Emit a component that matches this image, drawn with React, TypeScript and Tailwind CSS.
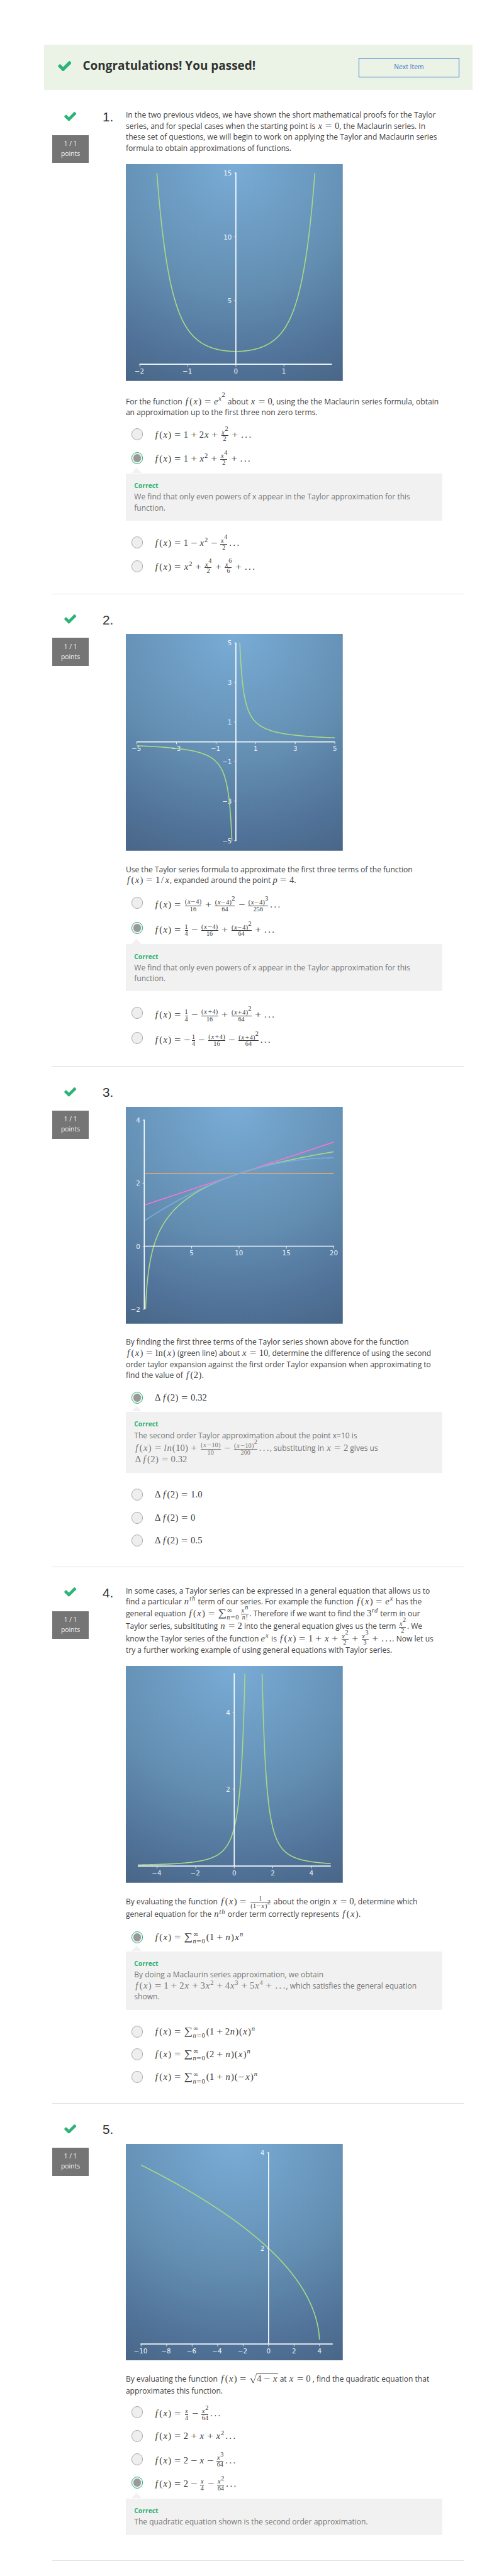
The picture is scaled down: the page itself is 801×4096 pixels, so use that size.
import React from "react";

/* ---------- math typesetting ---------- */

const GLYPHS: Record<string, string> = {
  f: "w-[0.56em] italic",
  x: "w-[0.572em] italic",
  n: "w-[0.6em] italic",
  e: "w-[0.466em] italic",
  p: "w-[0.503em] italic",
  t: "w-[0.361em] italic",
  h: "w-[0.576em] italic",
  r: "w-[0.451em] italic",
  d: "w-[0.52em] italic",
  l: "w-[0.298em] italic",
  L: "w-[0.278em]",
  N: "w-[0.556em]",
  "(": "w-[0.389em]",
  ")": "w-[0.389em]",
  "Δ": "w-[0.833em]",
  "∞": "w-[1em]",
  ".": "w-[0.278em]",
  "…": "w-[0.42em]",
  "!": "w-[0.278em]",
  "/": "w-[0.5em]",
};

const UPRIGHT: Record<string, string> = { L: "l", N: "n", "…": "." };

function group(s: string, at: number): [string, number] {
  let depth = 0;
  for (let i = at; i < s.length; i++) {
    if (s[i] === "{") depth++;
    if (s[i] === "}") depth--;
    if (depth === 0) return [s.slice(at + 1, i), i + 1];
  }
  return [s.slice(at + 1), s.length];
}

function typeset(s: string, level: number): React.ReactNode[] {
  const out: React.ReactNode[] = [];
  let i = 0;
  while (i < s.length) {
    const c = s[i];
    const key = i;
    if (c === "^") {
      const [body, next] = group(s, i + 1);
      out.push(
        <span
          key={key}
          className={
            level === 0
              ? "mr-[0.07em] text-[0.72em] leading-[0] align-[0.56em]"
              : "leading-[0] align-[0.54em]"
          }
        >
          {typeset(body, level + 1)}
        </span>,
      );
      i = next;
    } else if (s.startsWith("\\frac", i)) {
      const [num, a] = group(s, i + 5);
      const [den, b] = group(s, a);
      out.push(
        <span
          key={key}
          className="mx-[0.17em] -my-4 inline-flex flex-col items-center align-middle text-[0.7em]"
        >
          <span className="box-content h-[1em] self-stretch border-b border-current text-center leading-[1em]">
            {typeset(num, 1)}
          </span>
          <span className="h-[0.95em] leading-[0.95em]">{typeset(den, 1)}</span>
        </span>,
      );
      i = b;
    } else if (s.startsWith("\\sum", i)) {
      out.push(
        <React.Fragment key={key}>
          <span className="inline-block w-[0.86em] origin-center scale-x-[1.16] text-center text-[1.13em] leading-[0]">
            ∑
          </span>
          <span className="-my-4 mr-[0.15em] inline-flex flex-col items-start align-middle text-[0.72em] leading-[1.05em]">
            <span>{typeset("∞", 1)}</span>
            <span>{typeset("n=0", 1)}</span>
          </span>
        </React.Fragment>,
      );
      i += 4;
    } else if (s.startsWith("\\sqrt", i)) {
      const [body, next] = group(s, i + 5);
      out.push(
        <span key={key} className="-my-3 inline-flex items-stretch align-[-4px]">
          <svg viewBox="0 0 14 20" className="h-[20px] w-[14px]" fill="none" stroke="currentColor">
            <path d="M1 12 L3.4 10.4" strokeWidth="0.8" />
            <path d="M3.4 10.4 L7.6 18.6" strokeWidth="1.5" />
            <path d="M7.6 18.9 L14 0.5" strokeWidth="0.8" />
          </svg>
          <span className="border-t border-current leading-[19px]">{typeset(body, level)}</span>
        </span>,
      );
      i = next;
    } else if (c === "+" || c === "−" || c === "=") {
      const prev = s[i - 1];
      const unary = c === "−" && (prev === "=" || prev === "(");
      const gap = level > 0 || unary ? "" : c === "=" ? "mx-[0.27em]" : "mx-[0.215em]";
      out.push(
        <span key={key} className={`inline-block w-[0.778em] text-center leading-[0] ${gap}`}>
          <span className="inline-block scale-x-[1.25]">{c}</span>
        </span>,
      );
      i++;
    } else {
      const cls = GLYPHS[c] ?? "w-[0.5em]";
      out.push(
        <span key={key} className={`inline-block text-center leading-[0] ${cls}`}>
          {UPRIGHT[c] ?? c}
        </span>,
      );
      i++;
    }
  }
  return out;
}

function M({ s }: { s: string }) {
  return (
    <span className="whitespace-nowrap font-['Liberation_Serif',serif] text-[16.94px] leading-[0]">
      {typeset(s, 0)}
    </span>
  );
}

/* ---------- small parts ---------- */

function Check({ className }: { className: string }) {
  return (
    <svg viewBox="121 334 1550 1188" className={className} fill="#2bb378">
      <path d="M1671 566q0 40-28 68l-724 724-136 136q-28 28-68 28t-68-28l-136-136-362-362q-28-28-28-68t28-68l136-136q28-28 68-28t68 28l294 295 656-657q28-28 68-28t68 28l136 136q28 28 28 68z" />
    </svg>
  );
}

function Line({ className = "h-[20.4px]", children }: { className?: string; children: React.ReactNode }) {
  return <div className={`whitespace-nowrap leading-[20px] ${className}`}>{children}</div>;
}

function Option({
  s,
  checked = false,
  className = "h-[42px]",
  label = "",
}: {
  s: string;
  checked?: boolean;
  className?: string;
  label?: string;
}) {
  return (
    <div className={`flex items-center pl-[10px] ${className}`}>
      {checked ? (
        <span className="flex size-[22px] items-center justify-center rounded-full border-2 border-[#2bb378] bg-[#f4f4f4]">
          <span className="size-[15px] rounded-full bg-[#999]" />
        </span>
      ) : (
        <span className="size-[22px] rounded-full border border-[#aaa] bg-[#eee]" />
      )}
      <span className={`ml-[20px] h-[20px] leading-[20px] text-[#373737] ${label}`}>
        <M s={s} />
      </span>
    </div>
  );
}

function Callout({ className, children }: { className: string; children: React.ReactNode }) {
  return (
    <div className={`relative w-[584px] bg-[#f1f1f1] pl-[15.5px] pt-[13px] text-[#757575] ${className}`}>
      <span className="absolute -top-[10px] left-[11px] h-0 w-0 border-x-[10px] border-b-[10px] border-x-transparent border-b-[#f1f1f1]" />
      <div className="h-[20px] text-[12px] font-bold leading-[20px] text-[#2bb378]">Correct</div>
      {children}
    </div>
  );
}

function Question({
  n,
  className,
  content,
  children,
}: {
  n: number;
  className: string;
  content: string;
  children: React.ReactNode;
}) {
  return (
    <section className={`mx-auto flex w-[760px] border-b-2 border-[#e0e0e0] ${className}`}>
      <div className="flex w-[68px] flex-col items-center pt-[38px]">
        <Check className="h-[17px] w-[22.5px]" />
        <div className="mt-[26px] flex h-[52px] w-[68px] flex-col items-center justify-center bg-[#757575] text-[12px] leading-[18.5px] text-[#f2f2f2]">
          <span>1 / 1</span>
          <span>points</span>
        </div>
      </div>
      <div className="w-[68px] pl-[25px] pt-[34px] font-['Liberation_Sans',sans-serif] text-[24px] leading-[28px] text-[#333]">
        {n}.
      </div>
      <div className={`w-[624px] ${content}`}>{children}</div>
    </section>
  );
}

/* ---------- charts ---------- */

type Tick = [number, string];
type Curve = { fn: (x: number) => number; from: number; to: number; color: string };

function Chart({
  id,
  x0,
  y0,
  sx,
  sy,
  xAxis,
  yAxis,
  xTicks,
  yTicks,
  curves,
}: {
  id: string;
  x0: number;
  y0: number;
  sx: number;
  sy: number;
  xAxis: [number, number];
  yAxis: [number, number];
  xTicks: number[];
  yTicks: number[];
  curves: Curve[];
}) {
  const text = (v: number): Tick => [v, v < 0 ? `−${-v}` : `${v}`];
  return (
    <svg viewBox="0 0 400 400" className="block size-[400px]">
      <defs>
        <radialGradient id={id} gradientUnits="userSpaceOnUse" cx="200" cy="0" r="450">
          <stop offset="0" stopColor="#79acd6" />
          <stop offset="0.5" stopColor="#648fb3" />
          <stop offset="0.8" stopColor="#52749b" />
          <stop offset="1" stopColor="#486585" />
        </radialGradient>
      </defs>
      <rect width="400" height="400" fill={`url(#${id})`} />
      <g fill="#edf4fa" fontFamily="'DejaVu Sans', sans-serif" fontSize="12">
        {xTicks.map(text).map(([v, t]) => (
          <text key={t} x={x0 + v * sx - (v < 0 ? 1 : 0)} y={y0 + 17.3} textAnchor="middle">
            {t}
          </text>
        ))}
        {yTicks.map(text).map(([v, t]) => (
          <text key={t} x={x0 - 7.5} y={y0 - v * sy + 4.8} textAnchor="end">
            {t}
          </text>
        ))}
      </g>
      {curves.map((c, k) => {
        const pts: string[] = [];
        for (let i = 0; i <= 300; i++) {
          const x = c.from + ((c.to - c.from) * i) / 300;
          pts.push(`${(x0 + x * sx).toFixed(2)},${(y0 - c.fn(x) * sy).toFixed(2)}`);
        }
        return <polyline key={k} points={pts.join(" ")} fill="none" stroke={c.color} strokeWidth="1.9" />;
      })}
      <g stroke="#f4f8fc" strokeWidth="1">
        {xTicks.map((v) => (
          <line key={v} x1={x0 + v * sx} x2={x0 + v * sx} y1={y0} y2={y0 + 4.5} />
        ))}
        {yTicks.map((v) => (
          <line key={v} x1={x0 - 3} x2={x0} y1={y0 - v * sy} y2={y0 - v * sy} />
        ))}
        <line x1={xAxis[0]} x2={xAxis[1]} y1={y0} y2={y0} strokeWidth="2" />
        <line x1={x0} x2={x0} y1={yAxis[0]} y2={yAxis[1]} strokeWidth="2" />
      </g>
    </svg>
  );
}

const GREEN = "#a9d786";

/* ---------- page ---------- */

export default function App() {
  return (
    <div className="h-[4096px] w-[801px] overflow-hidden bg-white">
      <main className="h-[4753px] w-[929px] pl-[23px] pt-[82.5px] font-['Open_Sans',sans-serif] text-[14px] text-[#424242] [zoom:0.8619]">
        <header className="ml-[58px] flex h-[83.5px] w-[790px] items-center bg-[#eaf3e6] pl-[25.5px] pr-[24px]">
          <Check className="mb-[5px] h-[19px] w-[25px]" />
          <h1 className="mb-[5px] ml-[21px] flex-1 text-[22px] font-bold leading-[30px] text-[#333]">
            Congratulations! You passed!
          </h1>
          <button className="h-[36px] w-[186px] border border-[#2a73cc] text-[12px] text-[#3a6fc0]">
            Next Item
          </button>
        </header>

        <Question n={1} className="h-[930px] pt-[2px]" content="pt-[34px]">
          <Line>In the two previous videos, we have shown the short mathematical proofs for the Taylor</Line>
          <Line>
            series, and for special cases when the starting point is <M s="x=0" />, the Maclaurin series. In
          </Line>
          <Line>these set of questions, we will begin to work on applying the Taylor and Maclaurin series</Line>
          <Line className="h-[39.8px]">formula to obtain approximations of functions.</Line>
          <Chart
            id="g1"
            x0={202.9}
            y0={369}
            sx={88.5}
            sy={23.5}
            xAxis={[25, 380]}
            yAxis={[15.5, 369]}
            xTicks={[-2, -1, 0, 1]}
            yTicks={[5, 10, 15]}
            curves={[{ fn: (x) => Math.exp(x * x), from: -1.6456, to: 1.6456, color: GREEN }]}
          />
          <Line className="mt-[26px] h-[21.3px]">
            For the function <M s="f(x)=e^{x^{2}}" /> about <M s="x=0" />, using the the Maclaurin series formula, obtain
          </Line>
          <Line className="h-[20px]">an approximation up to the first three non zero terms.</Line>
          <Option className="mt-[9px] h-[44px]" label="mt-[2px]" s="f(x)=1+2x+\frac{x^{2}}{2}+………" />
          <Option className="h-[44px]" label="mt-[2px]" checked s="f(x)=1+x^{2}+\frac{x^{4}}{2}+………" />
          <Callout className="mt-[6px] h-[87px]">
            <Line>We find that only even powers of x appear in the Taylor approximation for this</Line>
            <Line>function.</Line>
          </Callout>
          <Option className="mt-[18px] h-[44px]" label="mt-[4px]" s="f(x)=1−x^{2}−\frac{x^{4}}{2}………" />
          <Option className="mt-px h-[44px]" label="mt-[2px]" s="f(x)=x^{2}+\frac{x^{4}}{2}+\frac{x^{6}}{6}+………" />
        </Question>

        <Question n={2} className="h-[872px]" content="pt-[74px]">
          <Chart
            id="g2"
            x0={202.9}
            y0={199}
            sx={36.5}
            sy={36.5}
            xAxis={[19.8, 385.4]}
            yAxis={[16, 382]}
            xTicks={[-5, -3, -1, 1, 3, 5]}
            yTicks={[-5, -3, -1, 1, 3, 5]}
            curves={[
              { fn: (x) => 1 / x, from: 0.2, to: 5, color: GREEN },
              { fn: (x) => 1 / x, from: -5, to: -0.2, color: GREEN },
            ]}
          />
          <Line className="mt-[24px] h-[20px]">
            Use the Taylor series formula to approximate the first three terms of the function
          </Line>
          <Line className="h-[20px]">
            <M s="f(x)=1/x" />, expanded around the point <M s="p=4" />.
          </Line>
          <Option className="mt-[9px] h-[46px]" label="mt-[7px]" s="f(x)=\frac{(x−4)}{16}+\frac{(x−4)^{2}}{64}−\frac{(x−4)^{3}}{256}………" />
          <Option className="h-[46px]" label="mt-[7px]" checked s="f(x)=\frac{1}{4}−\frac{(x−4)}{16}+\frac{(x−4)^{2}}{64}+………" />
          <Callout className="mt-[7px] h-[87px]">
            <Line>We find that only even powers of x appear in the Taylor approximation for this</Line>
            <Line>function.</Line>
          </Callout>
          <Option className="mt-[17px] h-[46px]" label="mt-[7px]" s="f(x)=\frac{1}{4}−\frac{(x+4)}{16}+\frac{(x+4)^{2}}{64}+………" />
          <Option className="h-[46px]" label="mt-[7px]" s="f(x)=−\frac{1}{4}−\frac{(x+4)}{16}−\frac{(x+4)^{2}}{64}………" />
        </Question>

        <Question n={3} className="h-[923px]" content="pt-[74px]">
          <Chart
            id="g3"
            x0={34}
            y0={257}
            sx={17.47}
            sy={58.15}
            xAxis={[34, 384]}
            yAxis={[23.5, 373.3]}
            xTicks={[5, 10, 15, 20]}
            yTicks={[-2, 0, 2, 4]}
            curves={[
              { fn: () => Math.log(10), from: 0.1, to: 20, color: "#dfa674" },
              { fn: (x) => Math.log(x), from: 0.1354, to: 3, color: GREEN },
              { fn: (x) => Math.log(x), from: 3, to: 20, color: GREEN },
              { fn: (x) => Math.log(10) + (x - 10) / 10, from: 0.1, to: 20, color: "#f376d0" },
              { fn: (x) => Math.log(10) + (x - 10) / 10 - (x - 10) ** 2 / 200, from: 0.1, to: 20, color: "#7aadd8" },
            ]}
          />
          <Line className="mt-[24px] h-[20.3px]">
            By finding the first three terms of the Taylor series shown above for the function
          </Line>
          <Line className="h-[20.7px]">
            <M s="f(x)=LN(x)" /> (green line) about <M s="x=10" />, determine the difference of using the second
          </Line>
          <Line className="h-[20px]">
            order taylor expansion against the first order Taylor expansion when approximating to
          </Line>
          <Line className="h-[20px]">
            find the value of <M s="f(2)" />.
          </Line>
          <Option className="mt-[11px] h-[42px]" checked s="Δf(2)=0.32" />
          <Callout className="mt-[5px] h-[113px]">
            <Line className="h-[24px]">The second order Taylor approximation about the point x=10 is</Line>
            <Line className="h-[20.4px]">
              <M s="f(x)=ln(10)+\frac{(x−10)}{10}−\frac{(x−10)^{2}}{200}………" />, substituting in <M s="x=2" /> gives us
            </Line>
            <Line>
              <M s="Δf(2)=0.32" />
            </Line>
          </Callout>
          <Option className="mt-[19px] h-[42px]" s="Δf(2)=1.0" />
          <Option s="Δf(2)=0" />
          <Option s="Δf(2)=0.5" />
        </Question>

        <Question n={4} className="h-[990px]" content="pt-[34px]">
          <Line className="h-[20px]">In some cases, a Taylor series can be expressed in a general equation that allows us to</Line>
          <Line className="h-[21.3px]">
            find a particular <M s="n^{th}" /> term of our series. For example the function <M s="f(x)=e^{x}" /> has the
          </Line>
          <Line className="h-[24px]">
            general equation <M s="f(x)=\sum\frac{x^{n}}{n!}" />. Therefore if we want to find the <M s="3^{rd}" /> term in our
          </Line>
          <Line className="h-[22.7px]">
            Taylor series, subsitituting <M s="n=2" /> into the general equation gives us the term{" "}
            <M s="\frac{x^{2}}{2}" />. We
          </Line>
          <Line className="h-[21px]">
            know the Taylor series of the function <M s="e^{x}" /> is <M s="f(x)=1+x+\frac{x^{2}}{2}+\frac{x^{3}}{3}+………" />. Now let us
          </Line>
          <Line className="h-[40px]">try a further working example of using general equations with Taylor series.</Line>
          <Chart
            id="g4"
            x0={199.9}
            y0={369}
            sx={35.55}
            sy={70.9}
            xAxis={[22, 378]}
            yAxis={[13.3, 369]}
            xTicks={[-4, -2, 0, 2, 4]}
            yTicks={[2, 4]}
            curves={[
              { fn: (x) => 1 / (1 - x) ** 2, from: -5, to: 0.5528, color: GREEN },
              { fn: (x) => 1 / (1 - x) ** 2, from: 1.4472, to: 5, color: GREEN },
            ]}
          />
          <Line className="mt-[24px] h-[24px]">
            By evaluating the function <M s="f(x)=\frac{1}{(1−x)^{2}}" /> about the origin <M s="x=0" />, determine which
          </Line>
          <Line className="h-[20px]">
            general equation for the <M s="n^{th}" /> order term correctly represents <M s="f(x)" />.
          </Line>
          <Option className="mt-[11px] h-[42px]" checked s="f(x)=\sum(1+n)x^{n}" />
          <Callout className="mt-[5px] h-[108px]">
            <Line>By doing a Maclaurin series approximation, we obtain</Line>
            <Line>
              <M s="f(x)=1+2x+3x^{2}+4x^{3}+5x^{4}+………" />, which satisfies the general equation
            </Line>
            <Line>shown.</Line>
          </Callout>
          <Option className="mt-[19px] h-[42px]" s="f(x)=\sum(1+2n)(x)^{n}" />
          <Option s="f(x)=\sum(2+n)(x)^{n}" />
          <Option s="f(x)=\sum(1+n)(−x)^{n}" />
        </Question>

        <Question n={5} className="h-[843px]" content="pt-[74px]">
          <Chart
            id="g5"
            x0={263.2}
            y0={369}
            sx={23.5}
            sy={88.2}
            xAxis={[27, 381.5]}
            yAxis={[15.5, 369]}
            xTicks={[-10, -8, -6, -4, -2, 0, 2, 4]}
            yTicks={[2, 4]}
            curves={[
              { fn: (x) => Math.sqrt(4 - x), from: -10, to: 3.5, color: GREEN },
              { fn: (x) => Math.sqrt(4 - x), from: 3.5, to: 3.992, color: GREEN },
            ]}
          />
          <Line className="mt-[24px] h-[21.6px]">
            By evaluating the function <M s="f(x)=\sqrt{4−x}" /> at <M s="x=0" /> , find the quadratic equation that
          </Line>
          <Line className="h-[20px]">approximates this function.</Line>
          <Option className="mt-[8px] h-[44px]" label="mt-[5px]" s="f(x)=\frac{x}{4}−\frac{x^{2}}{64}………" />
          <Option className="h-[44px]" s="f(x)=2+x+x^{2}………" />
          <Option className="mt-[-1px] h-[43px]" label="mt-[4px]" s="f(x)=2−x−\frac{x^{3}}{64}………" />
          <Option className="h-[44px]" label="mt-[5px]" checked s="f(x)=2−\frac{x}{4}−\frac{x^{2}}{64}………" />
          <Callout className="mt-[7px] h-[67px]">
            <Line>The quadratic equation shown is the second order approximation.</Line>
          </Callout>
        </Question>
      </main>
    </div>
  );
}
